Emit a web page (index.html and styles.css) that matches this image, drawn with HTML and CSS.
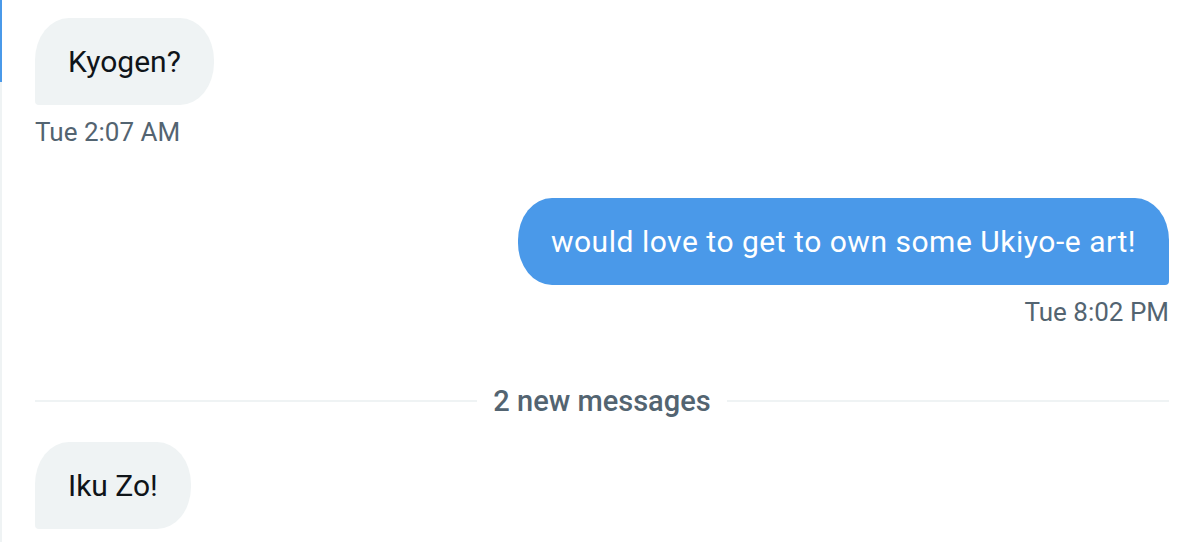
FILE: index.html
```html
<!DOCTYPE html>
<html>
<head>
<meta charset="utf-8">
<link rel="stylesheet" href="styles.css">
</head>
<body>
<div class="thread">
  <div class="focus-bar"></div>
  <div class="msg msg-in">
    <div class="bubble bubble-in">Kyogen?</div>
    <div class="time">Tue 2:07 AM</div>
  </div>
  <div class="msg msg-out">
    <div class="bubble bubble-out">would love to get to own some Ukiyo-e art!</div>
    <div class="time">Tue 8:02 PM</div>
  </div>
  <div class="divider">
    <span class="line"></span>
    <span class="divider-text">2 new messages</span>
    <span class="line"></span>
  </div>
  <div class="msg msg-in">
    <div class="bubble bubble-in">Iku Zo!</div>
  </div>
</div>
</body>
</html>
```
FILE: styles.css
```css
html, body {
  margin: 0;
  padding: 0;
  background: #ffffff;
}
body {
  font-family: Roboto, "Liberation Sans", Arial, sans-serif;
  width: 1196px;
  height: 542px;
  overflow: hidden;
}
.thread {
  position: relative;
  height: 542px;
  box-sizing: border-box;
  border-left: 2px solid #eff3f4;
  padding: 18px 27px 0 33px;
  display: flex;
  flex-direction: column;
}
.focus-bar {
  position: absolute;
  left: -2px;
  top: 0;
  width: 2px;
  height: 82px;
  background: #4a99e9;
}
.msg {
  display: flex;
  flex-direction: column;
}
.msg-in { align-items: flex-start; }
.msg-out { align-items: flex-end; margin-top: 51px; }
.bubble {
  height: 87px;
  box-sizing: border-box;
  display: flex;
  align-items: center;
  font-size: 30px;
  padding: 0 33px;
}
.bubble-in {
  background: #eff3f4;
  color: #0f1419;
  border-radius: 34px 34px 34px 4px / 42px 42px 42px 4px;
}
.bubble-out {
  background: #4a99e9;
  color: #ffffff;
  letter-spacing: 0.52px;
  border-radius: 34px 34px 4px 34px / 42px 42px 4px 42px;
}
.time {
  margin-top: 12px;
  font-size: 26px;
  color: #536471;
  line-height: 30px;
}
.divider {
  display: flex;
  align-items: center;
  gap: 16px;
  margin-top: 59px;
  height: 30px;
}
.line {
  flex: 1;
  height: 2px;
  background: #eff3f4;
}
.divider-text {
  font-size: 29px;
  font-weight: 500;
  color: #536471;
}
.divider + .msg { margin-top: 26px; }
```
